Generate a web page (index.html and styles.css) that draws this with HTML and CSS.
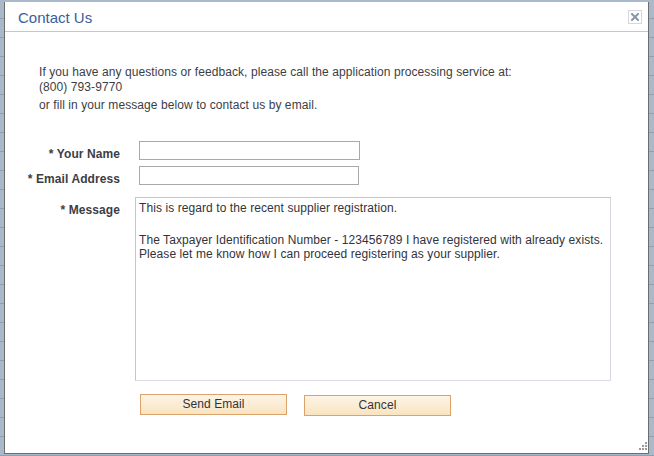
FILE: index.html
```html
<!DOCTYPE html>
<html>
<head>
<meta charset="utf-8">
<link rel="stylesheet" href="styles.css">
</head>
<body>
<div class="backdrop"></div>
<div class="dialog">
  <div class="dialog-header">
    <span class="dialog-title">Contact Us</span>
    <span class="close-btn" title="Close">
      <svg width="8" height="8" viewBox="0 0 8 8"><path d="M1 1 L7 7 M7 1 L1 7" stroke="#8797ab" stroke-width="2" stroke-linecap="square"/></svg>
    </span>
  </div>
  <div class="dialog-body">
    <div class="intro">
      <div>If you have any questions or feedback, please call the application processing service at:</div>
      <div>(800) 793-9770</div>
      <div class="intro-last">or fill in your message below to contact us by email.</div>
    </div>
    <div class="form">
      <div class="row">
        <label class="label">* Your Name</label>
        <div class="input input-name"></div>
      </div>
      <div class="row row-email">
        <label class="label">* Email Address</label>
        <div class="input input-email"></div>
      </div>
      <div class="row row-message">
        <label class="label">* Message</label>
        <div class="textarea">
          <div>This is regard to the recent supplier registration.</div>
          <div class="blank"></div>
          <div>The Taxpayer Identification Number - 123456789 I have registered with already exists.</div>
          <div>Please let me know how I can proceed registering as your supplier.</div>
        </div>
      </div>
      <div class="buttons">
        <button class="btn">Send Email</button>
        <button class="btn btn-cancel">Cancel</button>
      </div>
    </div>
  </div>
  <div class="grip">
    <span class="dot d1"></span>
    <span class="dot d2"></span><span class="dot d3"></span>
    <span class="dot d4"></span><span class="dot d5"></span><span class="dot d6"></span>
  </div>
</div>
</body>
</html>
```
FILE: styles.css
```css
html, body {
  margin: 0;
  padding: 0;
}
body {
  width: 654px;
  height: 456px;
  overflow: hidden;
  background: #aab9ca;
  font-family: "Liberation Sans", Arial, sans-serif;
  position: relative;
}
.backdrop {
  position: absolute;
  left: 0;
  top: 0;
  width: 654px;
  height: 456px;
  background: repeating-linear-gradient(to bottom, transparent 0, transparent 18px, #8e9fb3 18px, #8e9fb3 19px);
}
.dialog {
  position: relative;
  margin: 2px 0 0 4px;
  width: 643px;
  height: 451px;
  background: #fff;
  border-left: 1px solid #6d6d6d;
  border-right: 1px solid #6d6d6d;
  border-bottom: 1px solid #6d6d6d;
}
.dialog-header {
  position: relative;
  height: 29px;
  border-bottom: 1px solid #c3c6cc;
  display: flex;
  align-items: center;
  padding-left: 13px;
}
.dialog-title {
  font-size: 15px;
  color: #3b5d9c;
  padding-top: 2px;
}
.close-btn {
  position: absolute;
  right: 6px;
  top: 8px;
  width: 12px;
  height: 12px;
  border: 1px solid #d4d8de;
  display: flex;
  align-items: center;
  justify-content: center;
}
.dialog-body {
  padding: 33px 0 0 20px;
  color: #3d3d45;
  font-size: 12px;
  letter-spacing: 0.08px;
}
.intro {
  margin-left: 14px;
  line-height: 15px;
}
.intro-last {
  margin-top: 3px;
}
.form {
  margin-top: 28px;
}
.row {
  display: flex;
  align-items: flex-start;
}
.row-email {
  margin-top: 6px;
}
.row-message {
  margin-top: 12px;
}
.label {
  width: 95px;
  text-align: right;
  font-weight: bold;
  line-height: 12px;
  padding-top: 7px;
  color: #3d3d45;
  white-space: nowrap;
}
.input {
  height: 17px;
  margin-left: 19px;
  border: 1px solid #a9a9a9;
  background: #fff;
}
.input-name {
  width: 219px;
}
.input-email {
  width: 218px;
}
.textarea {
  margin-left: 15px;
  width: 468px;
  height: 179px;
  padding: 3px 3px 0 3px;
  border: 1px solid #c6c6cc;
  border-bottom-color: #dedee8;
  border-right-color: #d6d6de;
  line-height: 14px;
  color: #33333a;
}
.blank {
  height: 18px;
}
.buttons {
  display: flex;
  align-items: flex-start;
  margin-top: 13px;
  margin-left: 115px;
}
.btn {
  width: 147px;
  height: 21px;
  border: 1px solid #dba36a;
  background: linear-gradient(to bottom, #fdf4e6, #f9e4c0);
  font-family: "Liberation Sans", Arial, sans-serif;
  font-size: 12px;
  letter-spacing: 0.08px;
  color: #33333a;
  padding: 0;
  margin: 0;
  line-height: 19px;
}
.btn-cancel {
  margin-left: 17px;
  margin-top: 1px;
}
.grip {
  position: absolute;
  right: 1px;
  bottom: 2px;
  width: 9px;
  height: 9px;
}
.dot {
  position: absolute;
  width: 2px;
  height: 2px;
  background: #9a9a9a;
}
.d1 { right: 0; top: 0; }
.d2 { right: 3px; top: 3px; }
.d3 { right: 0; top: 3px; }
.d4 { right: 6px; top: 6px; }
.d5 { right: 3px; top: 6px; }
.d6 { right: 0; top: 6px; }
```
